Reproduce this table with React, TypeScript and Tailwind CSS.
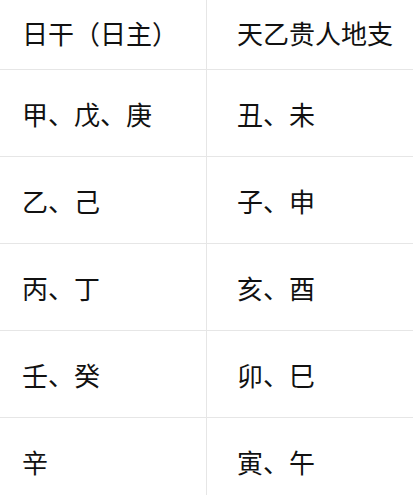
const rows: [string, string][] = [
  ["甲、戊、庚", "丑、未"],
  ["乙、己", "子、申"],
  ["丙、丁", "亥、酉"],
  ["壬、癸", "卯、巳"],
  ["辛", "寅、午"],
];

export default function App() {
  return (
    <div className="w-[413px] h-[495px] overflow-hidden bg-white text-[26px] text-[#111] font-['Noto_Sans_CJK_SC','Noto_Sans',sans-serif]">
      <div className="grid grid-cols-[207px_1fr] h-[70px] border-b border-[#e6e6e6]">
        <div className="flex items-center pl-[22px] pb-[5px] border-r border-[#e6e6e6]">日干（日主）</div>
        <div className="flex items-center pl-[30px] pb-[5px]">天乙贵人地支</div>
      </div>
      {rows.map(([gan, zhi]) => (
        <div key={gan} className="grid grid-cols-[207px_1fr] h-[87px] border-b border-[#e6e6e6]">
          <div className="flex items-center pl-[22px] border-r border-[#e6e6e6]">{gan}</div>
          <div className="flex items-center pl-[30px]">{zhi}</div>
        </div>
      ))}
    </div>
  );
}
